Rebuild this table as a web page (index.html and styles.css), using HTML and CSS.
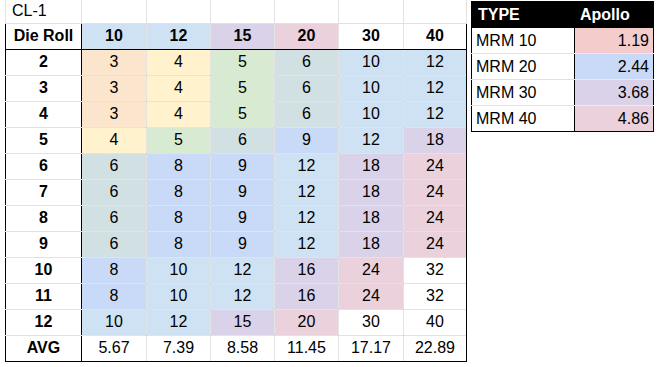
FILE: index.html
```html
<!DOCTYPE html>
<html>
<head>
<meta charset="utf-8">
<link rel="stylesheet" href="styles.css">
</head>
<body>
<div class="sheet">
  <table class="main">
    <colgroup>
      <col class="c-roll"><col class="c65"><col class="c64"><col class="c64"><col class="c64"><col class="c65"><col class="c63">
    </colgroup>
    <tr class="title">
      <td class="lbl">CL-1</td><td></td><td></td><td></td><td></td><td></td><td></td>
    </tr>
    <tr class="head">
      <th class="roll">Die Roll</th>
      <th class="lb">10</th><th class="lb">12</th><th class="pu">15</th><th class="mg">20</th><th>30</th><th class="last">40</th>
    </tr>
    <tr class="first"><th class="roll">2</th><td class="or">3</td><td class="ye">4</td><td class="gr">5</td><td class="cy">6</td><td class="lb">10</td><td class="lb last">12</td></tr>
    <tr><th class="roll">3</th><td class="or">3</td><td class="ye">4</td><td class="gr">5</td><td class="cy">6</td><td class="lb">10</td><td class="lb last">12</td></tr>
    <tr><th class="roll">4</th><td class="or">3</td><td class="ye">4</td><td class="gr">5</td><td class="cy">6</td><td class="lb">10</td><td class="lb last">12</td></tr>
    <tr><th class="roll">5</th><td class="ye">4</td><td class="gr">5</td><td class="cy">6</td><td class="bl">9</td><td class="lb">12</td><td class="pu last">18</td></tr>
    <tr><th class="roll">6</th><td class="cy">6</td><td class="bl">8</td><td class="bl">9</td><td class="lb">12</td><td class="pu">18</td><td class="mg last">24</td></tr>
    <tr><th class="roll">7</th><td class="cy">6</td><td class="bl">8</td><td class="bl">9</td><td class="lb">12</td><td class="pu">18</td><td class="mg last">24</td></tr>
    <tr><th class="roll">8</th><td class="cy">6</td><td class="bl">8</td><td class="bl">9</td><td class="lb">12</td><td class="pu">18</td><td class="mg last">24</td></tr>
    <tr><th class="roll">9</th><td class="cy">6</td><td class="bl">8</td><td class="bl">9</td><td class="lb">12</td><td class="pu">18</td><td class="mg last">24</td></tr>
    <tr><th class="roll">10</th><td class="bl">8</td><td class="lb">10</td><td class="lb">12</td><td class="pu">16</td><td class="mg">24</td><td class="last">32</td></tr>
    <tr><th class="roll">11</th><td class="bl">8</td><td class="lb">10</td><td class="lb">12</td><td class="pu">16</td><td class="mg">24</td><td class="last">32</td></tr>
    <tr><th class="roll">12</th><td class="lb">10</td><td class="lb">12</td><td class="pu">15</td><td class="mg">20</td><td>30</td><td class="last">40</td></tr>
    <tr class="avg"><th class="roll">AVG</th><td>5.67</td><td>7.39</td><td>8.58</td><td>11.45</td><td>17.17</td><td class="last">22.89</td></tr>
  </table>

  <table class="side">
    <colgroup><col class="c-type"><col class="c-apollo"></colgroup>
    <tr class="shead"><th>TYPE</th><th>Apollo</th></tr>
    <tr><td class="type">MRM 10</td><td class="val rd">1.19</td></tr>
    <tr><td class="type">MRM 20</td><td class="val bl">2.44</td></tr>
    <tr><td class="type">MRM 30</td><td class="val pu">3.68</td></tr>
    <tr><td class="type">MRM 40</td><td class="val mg">4.86</td></tr>
  </table>
</div>
</body>
</html>
```

FILE: styles.css
```css
html, body {
  margin: 0;
  padding: 0;
  background: #ffffff;
}

body {
  font-family: "Liberation Sans", Arial, sans-serif;
  font-size: 16px;
  color: #000000;
}

.sheet {
  display: flex;
  align-items: flex-start;
  gap: 4px;
  padding-left: 5px;
}

table {
  border-collapse: collapse;
  table-layout: fixed;
}

td, th {
  padding: 0;
  vertical-align: middle;
  text-align: center;
  font-weight: normal;
  white-space: nowrap;
  overflow: hidden;
}

/* main table */
.main {
  width: 462px;
}

.c-roll { width: 76px; }
.c65 { width: 65px; }
.c64 { width: 64px; }
.c63 { width: 63px; }

.main tr {
  height: 26px;
}

.main td {
  border: 1px solid rgba(0, 0, 0, 0.11);
}

.main .title {
  height: 23px;
}

.main .title td {
  border-top: none;
  border-bottom: 1px solid #000;
  border-color: #e2e2e2;
}

.main .title .lbl {
  text-align: left;
  padding-left: 6px;
}

.main .head th {
  font-weight: bold;
  border: 1px solid rgba(0, 0, 0, 0.11);
  border-top: 1px solid #000;
  border-bottom: 1px solid #000;
}

.main th.roll {
  font-weight: bold;
  border-left: 1px solid #000;
  border-right: 1px solid #000;
  border-top: 1px solid #e2e2e2;
  border-bottom: 1px solid #e2e2e2;
  background: #ffffff;
}

.main .head th.roll {
  border-top: 1px solid #000;
  border-bottom: 1px solid #000;
}

.main .last {
  border-right: 1px solid #000;
}

.main .head th.last {
  border-right: 1px solid #000;
}

.main .avg td,
.main .avg th {
  border-top: 1px solid #000;
  border-bottom: 1px solid #000;
}

.main .avg td {
  border-left: 1px solid #e2e2e2;
  border-right: 1px solid #e2e2e2;
}

.main .avg td.last {
  border-right: 1px solid #000;
}

.main .avg th.roll {
  border-top: 1px solid #000;
  border-bottom: 1px solid #000;
}

/* colours (sheets palette) */
.or { background: #fce5cd; }
.ye { background: #fff2cc; }
.gr { background: #d9ead3; }
.cy { background: #d0e0e3; }
.bl { background: #c9daf8; }
.lb { background: #cfe2f3; }
.pu { background: #d9d2e9; }
.mg { background: #ead1dc; }
.rd { background: #f4cccc; }

/* side table */
.side {
  width: 182px;
  margin-top: 1px;
  border: 1px solid #000;
}

.c-type { width: 103px; }
.c-apollo { width: 79px; }

.side tr {
  height: 26px;
}

.side .shead th {
  background: #000;
  color: #fff;
  font-weight: bold;
  text-align: left;
  padding-left: 6px;
  border: 1px solid #000;
}

.side .shead th + th {
  padding-left: 5px;
}

.side td {
  border-top: 1px solid #e2e2e2;
  border-bottom: 1px solid #e2e2e2;
}

.side td.type {
  text-align: left;
  padding-left: 4px;
  border-right: 1px solid #000;
  background: #fff;
}

.side td.val {
  text-align: right;
  padding-right: 4px;
  border-top: 1px solid rgba(0, 0, 0, 0.08);
  border-bottom: 1px solid rgba(0, 0, 0, 0.08);
}

.side tr:last-child td {
  border-bottom: 1px solid #000;
}
```
